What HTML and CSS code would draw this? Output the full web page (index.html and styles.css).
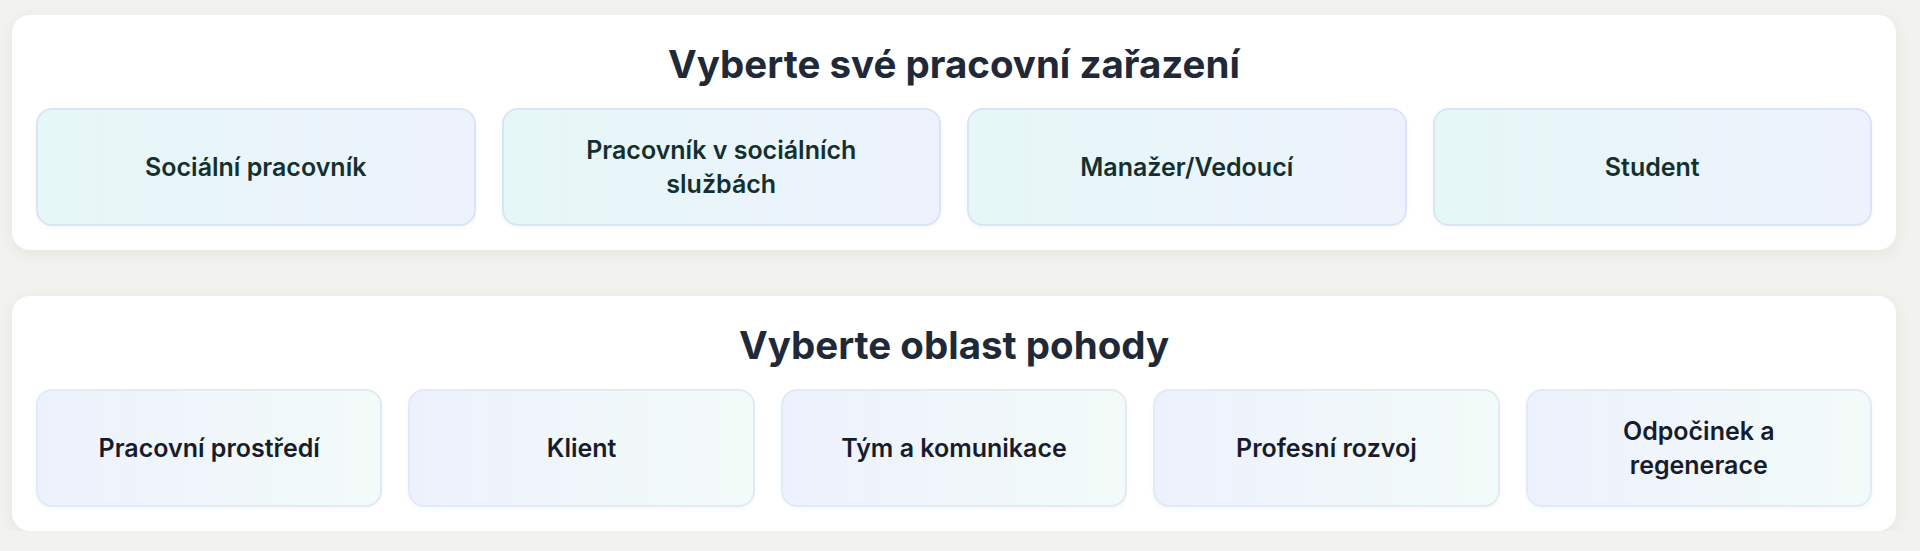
FILE: index.html
```html
<!DOCTYPE html>
<html lang="cs">
<head>
    <meta charset="UTF-8">
    <meta name="viewport" content="width=device-width, initial-scale=1.0">
    <title>Pohoda v práci</title>
    <link rel="stylesheet" href="styles.css">
</head>
<body>
    <div class="page">
        <section class="panel">
            <h2 class="panel-title">Vyberte své pracovní zařazení</h2>
            <div class="choices roles">
                <button class="choice role">Sociální pracovník</button>
                <button class="choice role">Pracovník v sociálních službách</button>
                <button class="choice role">Manažer/Vedoucí</button>
                <button class="choice role">Student</button>
            </div>
        </section>

        <section class="panel">
            <h2 class="panel-title">Vyberte oblast pohody</h2>
            <div class="choices areas">
                <button class="choice area">Pracovní prostředí</button>
                <button class="choice area">Klient</button>
                <button class="choice area">Tým a komunikace</button>
                <button class="choice area">Profesní rozvoj</button>
                <button class="choice area">Odpočinek a regenerace</button>
            </div>
        </section>
    </div>
</body>
</html>
```

FILE: styles.css
```css
:root {
    --page-bg: #f2f2ee;
    --title-color: #1f2937;
    --role-text: #13302f;
    --area-text: #171c2c;
}

* {
    box-sizing: border-box;
    margin: 0;
    padding: 0;
    font-family: Inter, 'Noto Sans', sans-serif;
}

body {
    background-color: var(--page-bg);
    padding: 15px 24px 0 12px;
}

.page {
    display: flex;
    flex-direction: column;
    gap: 46px;
}

.panel {
    background-color: white;
    border-radius: 18px;
    padding: 24px;
    box-shadow: 0 4px 18px rgba(0, 0, 0, 0.06);
}

.panel-title {
    font-size: 38.5px;
    font-weight: 700;
    line-height: 50px;
    color: var(--title-color);
    text-align: center;
    margin-bottom: 19px;
}

.choices {
    display: grid;
    gap: 26px;
}

.roles {
    grid-template-columns: repeat(4, 1fr);
}

.areas {
    grid-template-columns: repeat(5, 1fr);
}

.choice {
    min-height: 118px;
    padding: 16px 38px;
    border-radius: 16px;
    border: 2px solid;
    font-size: 25px;
    font-weight: 600;
    line-height: 34px;
    text-align: center;
    display: flex;
    align-items: center;
    justify-content: center;
    cursor: pointer;
    box-shadow: 0 2px 4px rgba(0, 0, 0, 0.03);
}

.choice.role {
    background: linear-gradient(90deg, #e5f7f6, #eef2fe);
    border-color: #dae4f7;
    color: var(--role-text);
}

.choice.area {
    background: linear-gradient(90deg, #edf1fd, #f3fbf8);
    border-color: #e0ebf3;
    color: var(--area-text);
}
```
